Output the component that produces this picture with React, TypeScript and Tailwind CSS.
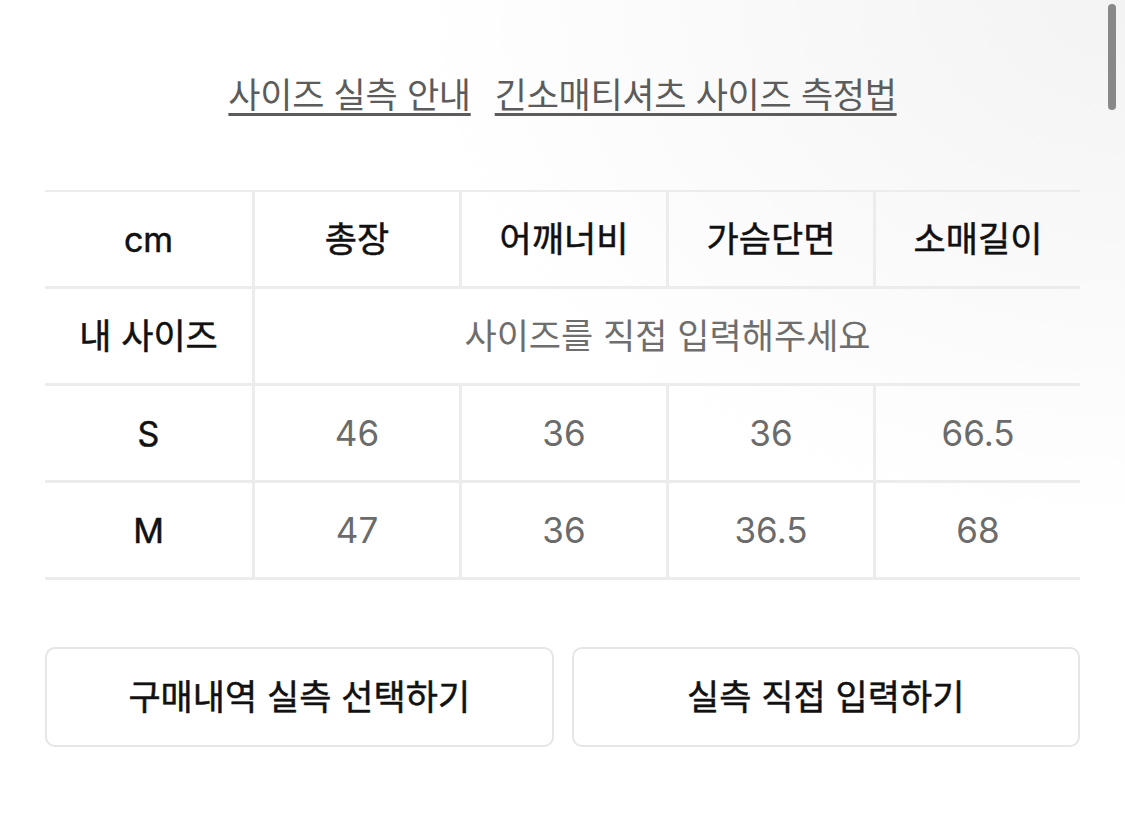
import React from "react";

const heads = ["총장", "어깨너비", "가슴단면", "소매길이"];

const rows = [
  { label: "S", values: ["46", "36", "36", "66.5"] },
  { label: "M", values: ["47", "36", "36.5", "68"] },
];

const font = "font-['Inter','Noto_Sans_CJK_KR',sans-serif]";
// medium-ish weight for the dark labels; the font's Medium renders too heavy
const dark = "text-[#111] [-webkit-text-stroke:0.5px_#111]";

export default function App() {
  return (
    <div className={`relative w-[1125px] h-[831px] bg-white overflow-hidden ${font}`}>
      {/* faint glare at the top right */}
      <div className="absolute inset-0 bg-[radial-gradient(ellipse_at_top_right,#f3f3f3_0%,#ffffff_45%)] pointer-events-none" />

      {/* scroll indicator */}
      <div className="absolute right-[9px] top-[4px] w-[8px] h-[106px] rounded-full bg-[#888888]" />

      <div className="relative px-[45px]">
        <div className="h-[190px] flex items-center justify-center gap-[24px] text-[35px] leading-none text-[#5c5c5c] tracking-[-0.3px]">
          <span className="underline decoration-[3px] underline-offset-[5px] decoration-[#5c5c5c]">사이즈 실측 안내</span>
          <span className="underline decoration-[3px] underline-offset-[5px] decoration-[#5c5c5c]">긴소매티셔츠 사이즈 측정법</span>
        </div>

        <div className="border-t-2 border-[#ececec]">
          <div className="grid grid-cols-5">
            <div className={`h-[97px] border-b-[3px] border-[#ececec] flex items-center justify-center text-[34px] ${dark}`}>cm</div>
            {heads.map((h) => (
              <div key={h} className={`h-[97px] border-b-[3px] border-l-[3px] border-[#ececec] flex items-center justify-center text-[35px] ${dark}`}>
                {h}
              </div>
            ))}
          </div>

          <div className="grid grid-cols-5">
            <div className={`h-[97px] border-b-[3px] border-[#ececec] flex items-center justify-center text-[35px] ${dark}`}>내 사이즈</div>
            <div className="col-span-4 h-[97px] border-b-[3px] border-l-[3px] border-[#ececec] flex items-center justify-center text-[35px] text-[#6e6e6e]">
              사이즈를 직접 입력해주세요
            </div>
          </div>

          {rows.map((r) => (
            <div key={r.label} className="grid grid-cols-5">
              <div className={`h-[97px] border-b-[3px] border-[#ececec] flex items-center justify-center text-[34px] ${dark}`}>{r.label}</div>
              {r.values.map((v, i) => (
                <div key={i} className="h-[97px] border-b-[3px] border-l-[3px] border-[#ececec] flex items-center justify-center text-[35px] text-[#6b6b6b]">
                  {v}
                </div>
              ))}
            </div>
          ))}
        </div>

        <div className="mt-[67px] grid grid-cols-2 gap-[18px]">
          <button className={`h-[100px] rounded-[10px] border-2 border-[#e6e6e6] bg-white text-[35px] ${dark}`}>구매내역 실측 선택하기</button>
          <button className={`h-[100px] rounded-[10px] border-2 border-[#e6e6e6] bg-white text-[35px] ${dark}`}>실측 직접 입력하기</button>
        </div>
      </div>
    </div>
  );
}
